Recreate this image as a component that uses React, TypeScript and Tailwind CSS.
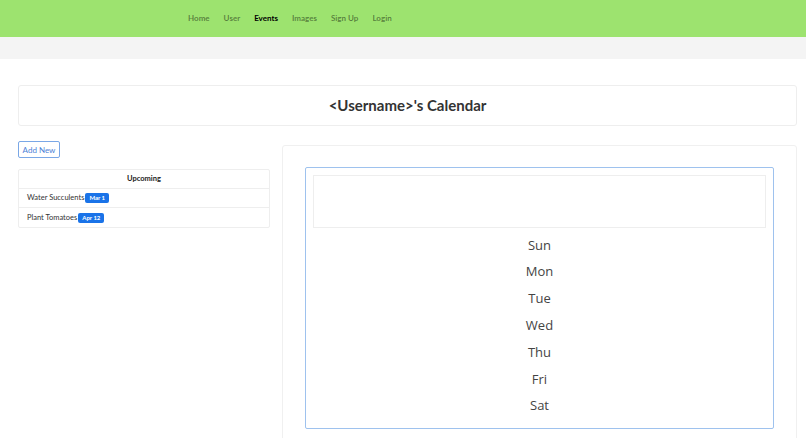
const links = ['Home', 'User', 'Events', 'Images', 'Sign Up', 'Login']
const days = ['Sun', 'Mon', 'Tue', 'Wed', 'Thu', 'Fri', 'Sat']

const upcoming = [
  { name: 'Water Succulents', date: 'Mar 1' },
  { name: 'Plant Tomatoes', date: 'Apr 12' },
]

function Navbar() {
  return (
    <nav className="h-[37px] bg-[#9de36f] flex items-center">
      <ul className="flex items-center gap-[14px] ml-[188px] -mt-[2px] text-[8px] font-bold font-['Lato',sans-serif]">
        {links.map((l) => (
          <li key={l} className={l === 'Events' ? 'text-black' : 'text-black/45'}>
            {l}
          </li>
        ))}
      </ul>
    </nav>
  )
}

export default function App() {
  return (
    <div className="min-h-[438px] bg-white text-[#333] font-['Lato',sans-serif]">
      <Navbar />
      <div className="h-[22px] bg-[#f4f4f4]" />
      <main className="px-[18px] pt-[26px] pr-[9px]">
        <div className="h-[41px] border border-[#eee] rounded-[3px] flex items-center justify-center">
          <h1 className="text-[15px] font-bold text-[#333]">&lt;Username&gt;'s Calendar</h1>
        </div>
        <div className="flex gap-[12px] mt-[15px]">
          <div className="w-[252px] shrink-0">
            <button className="block h-[17px] w-[42px] border border-[#7aa7e6] rounded-[2px] text-[8px] text-[#4d7fd6] leading-none">
              Add New
            </button>
            <div className="mt-[11px] border border-[#eee] rounded-[2px] text-[7.5px]">
              <div className="h-[19px] flex items-center justify-center font-bold text-[#222] border-b border-[#eee]">
                Upcoming
              </div>
              {upcoming.map((e, i) => (
                <div
                  key={e.name}
                  className={`h-[19px] flex items-center px-[8px] text-[#333] ${i === 0 ? 'border-b border-[#eee]' : ''}`}
                >
                  {e.name}
                  <span className="ml-px bg-[#1a73e8] text-white font-bold text-[6px] rounded-[2px] px-[4px] py-[2px] leading-none">
                    {e.date}
                  </span>
                </div>
              ))}
            </div>
          </div>
          <div className="flex-1 mt-[4px] border border-[#f0f0f0] rounded-[3px] px-[22px] pt-[21px] h-[300px]">
            <div className="border border-[#9ec2ee] rounded-[2px] p-[7px] pb-[8px]">
              <div className="h-[53px] border border-[#eee]" />
              <ul className="mt-[4px] text-[13px] text-[#444] text-center font-['Open_Sans',sans-serif]">
                {days.map((d) => (
                  <li key={d} className="h-[26.8px] flex items-center justify-center">
                    {d}
                  </li>
                ))}
              </ul>
            </div>
          </div>
        </div>
      </main>
    </div>
  )
}
